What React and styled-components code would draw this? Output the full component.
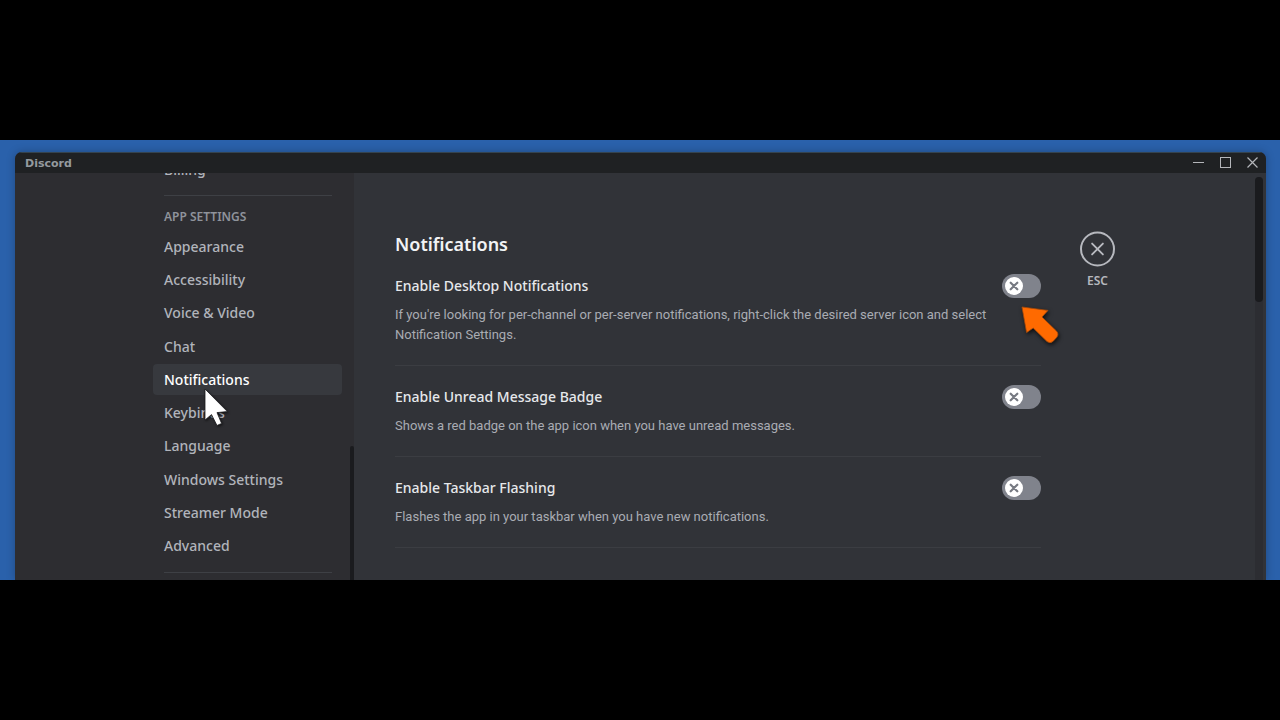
import React from "react";
import styled, { createGlobalStyle } from "styled-components";

const GlobalStyle = createGlobalStyle`
  * {
    box-sizing: border-box;
  }
  body {
    margin: 0;
    background: #000;
    font-family: "Noto Sans", "Open Sans", sans-serif;
  }
`;

const Page = styled.div`
  display: grid;
  grid-template-rows: 7fr 22fr 7fr;
  height: 100vh;
`;

const Desktop = styled.div`
  grid-row: 2;
  display: flex;
  min-height: 0;
  padding: 12px 14px 0 15px;
  overflow: hidden;
  background: #2a61ab;
`;

const Window = styled.div`
  flex: 1;
  display: flex;
  flex-direction: column;
  min-width: 0;
  overflow: hidden;
  border-radius: 7px 7px 0 0;
  background: #313338;
  box-shadow: 0 0 8px rgba(0, 0, 0, 0.25);
`;

const TitleBar = styled.header`
  flex: none;
  display: flex;
  justify-content: space-between;
  height: 21px;
  padding-left: 10px;
  background: #1f2123;
  box-shadow: inset 0 1px 0 #34434f;
`;

const Wordmark = styled.span`
  font-family: "DejaVu Sans", sans-serif;
  font-size: 11px;
  font-weight: 700;
  line-height: 24px;
  color: #949a9f;
`;

const WindowButtons = styled.div`
  display: flex;
`;

const WindowButton = styled.button`
  display: grid;
  place-items: center;
  width: 27px;
  padding: 0;
  border: 0;
  background: none;
  color: #b4b6ba;
`;

const Body = styled.div`
  flex: 1;
  display: grid;
  grid-template-columns: 339fr 912fr;
  min-height: 0;
`;

const Sidebar = styled.aside`
  display: flex;
  justify-content: flex-end;
  min-height: 0;
  overflow: hidden;
  background: #2d2d31;
`;

const Nav = styled.nav`
  width: 189px;
  margin-top: -19px;
  margin-right: 8px;
`;

const NavList = styled.ul`
  display: grid;
  gap: 2px;
  min-height: ${(props) => (props.$tall ? "331px" : "31px")};
  margin: 0;
  padding: 0;
  list-style: none;
`;

const NavItem = styled.li`
  position: relative;
  display: grid;
`;

const NavLink = styled.a`
  display: flex;
  align-items: center;
  min-height: 31px;
  padding: 0 11px;
  border-radius: 4px;
  font-size: 14px;
  font-weight: 500;
  line-height: 20px;
  text-decoration: none;
  color: ${(props) => (props.$active ? "#fff" : "#b1b4bb")};
  background: ${(props) => (props.$active ? "#37393e" : "transparent")};
`;

const NavDivider = styled.hr`
  height: 1px;
  margin: 10px 10px 11px 11px;
  border: 0;
  background: #3e4045;
`;

const NavHeading = styled.h2`
  margin: 0 0 4px 11px;
  font-size: 12px;
  font-weight: 600;
  line-height: 20px;
  text-transform: uppercase;
  color: #8f939b;
`;

const SidebarTrack = styled.div`
  width: 4px;
  display: flex;
  flex-direction: column;
  justify-content: flex-end;
`;

const SidebarThumb = styled.div`
  height: 33%;
  border-radius: 2px 2px 0 0;
  background: #1a1b1e;
`;

const Main = styled.main`
  display: flex;
  min-width: 0;
  min-height: 0;
  overflow: hidden;
  background: #313338;
`;

const Content = styled.section`
  flex: 0 1 646px;
  margin: 60px 39px 0 41px;
`;

const Title = styled.h1`
  margin: 0;
  font-size: 18px;
  font-weight: 600;
  line-height: 22px;
  color: #f2f3f5;
`;

const Setting = styled.div`
  padding: 19px 0 20px;
  border-bottom: 1px solid #3b3d42;
`;

const SettingHead = styled.div`
  display: flex;
  align-items: center;
  justify-content: space-between;
  height: 24px;
  margin-bottom: 7px;
`;

const SettingLabel = styled.label`
  font-size: 14px;
  font-weight: 500;
  line-height: 24px;
  color: #e6e8eb;
`;

const SettingNote = styled.p`
  margin: 0;
  font-family: Roboto, "Noto Sans", sans-serif;
  font-size: 13px;
  line-height: 20px;
  color: #a9acb3;
`;

const SwitchBox = styled.span`
  position: relative;
  display: grid;
`;

const SwitchInput = styled.input`
  grid-area: 1 / 1;
  appearance: none;
  width: 39px;
  height: 24px;
  margin: 0;
  border-radius: 12px;
  background: #80838c;

  &:checked {
    background: #23a55a;
  }
`;

const Knob = styled.svg`
  grid-area: 1 / 1;
  pointer-events: none;

  ${SwitchInput}:checked + & {
    transform: translateX(15px);
  }
`;

const Arrow = styled.svg`
  position: absolute;
  top: 31px;
  left: 18px;
  filter: drop-shadow(1px 2px 2px rgba(0, 0, 0, 0.7));
`;

const Pointer = styled.svg`
  position: absolute;
  top: 23px;
  left: 50px;
  z-index: 1;
  filter: drop-shadow(1px 1px 1px rgba(0, 0, 0, 0.6));
`;

const CloseButton = styled.button`
  display: flex;
  flex-direction: column;
  align-items: center;
  align-self: flex-start;
  gap: 4px;
  margin-top: 58px;
  padding: 0;
  border: 0;
  background: none;
  font-family: inherit;
  font-size: 12px;
  font-weight: 600;
  line-height: 20px;
  color: #b6b8be;
`;

const MainTrack = styled.div`
  width: 8px;
  margin: 4px 3px 0 auto;
  border-radius: 4px 4px 0 0;
  background: #2c2d32;
`;

const MainThumb = styled.div`
  height: 31%;
  border-radius: 4px;
  background: #1a1b1e;
`;

const navItems = [
  "Appearance",
  "Accessibility",
  "Voice & Video",
  "Chat",
  "Notifications",
  "Keybinds",
  "Language",
  "Windows Settings",
  "Streamer Mode",
  "Advanced",
];

const settings = [
  {
    id: "desktop",
    label: "Enable Desktop Notifications",
    note: "If you're looking for per-channel or per-server notifications, right-click the desired server icon and select Notification Settings.",
    arrow: true,
  },
  {
    id: "badge",
    label: "Enable Unread Message Badge",
    note: "Shows a red badge on the app icon when you have unread messages.",
  },
  {
    id: "flashing",
    label: "Enable Taskbar Flashing",
    note: "Flashes the app in your taskbar when you have new notifications.",
  },
];

const Switch = ({ id, children }) => (
  <SwitchBox>
    <SwitchInput type="checkbox" id={id} />
    <Knob width="24" height="24" viewBox="0 0 24 24" aria-hidden="true">
      <circle cx="12" cy="12" r="9" fill="#fff" />
      <path d="M8.7 8.7l6.6 6.6M15.3 8.7l-6.6 6.6" stroke="#777a82" strokeWidth="2.2" strokeLinecap="round" />
    </Knob>
    {children}
  </SwitchBox>
);

const App = () => {
  return (
    <Page>
      <GlobalStyle />
      <Desktop>
        <Window>
          <TitleBar>
            <Wordmark>Discord</Wordmark>
            <WindowButtons>
              <WindowButton aria-label="Minimize">
                <svg width="11" height="11" viewBox="0 0 11 11">
                  <path d="M0 5.5h11" stroke="currentColor" />
                </svg>
              </WindowButton>
              <WindowButton aria-label="Maximize">
                <svg width="11" height="11" viewBox="0 0 11 11">
                  <rect x="0.5" y="0.5" width="10" height="10" fill="none" stroke="currentColor" />
                </svg>
              </WindowButton>
              <WindowButton aria-label="Close">
                <svg width="11" height="11" viewBox="0 0 11 11">
                  <path d="M0.5 0.5l10 10M10.5 0.5l-10 10" stroke="currentColor" strokeWidth="1.2" />
                </svg>
              </WindowButton>
            </WindowButtons>
          </TitleBar>
          <Body>
            <Sidebar>
              <Nav>
                <NavList>
                  <NavItem>
                    <NavLink href="#">Billing</NavLink>
                  </NavItem>
                </NavList>
                <NavDivider />
                <NavHeading>App Settings</NavHeading>
                <NavList $tall>
                  {navItems.map((item) => (
                    <NavItem key={item}>
                      <NavLink href="#" $active={item === "Notifications"}>
                        {item}
                      </NavLink>
                      {item === "Notifications" && (
                        <Pointer width="26" height="40" viewBox="-2 -2 26 40" aria-hidden="true">
                          <path
                            d="M0 0V31L6.5 25.6L12 36.5L16.6 34.4L12 23.6L22.4 22.6Z"
                            fill="#fff"
                            stroke="#1c1c1f"
                            strokeWidth="0.8"
                          />
                        </Pointer>
                      )}
                    </NavItem>
                  ))}
                </NavList>
                <NavDivider />
              </Nav>
              <SidebarTrack>
                <SidebarThumb />
              </SidebarTrack>
            </Sidebar>
            <Main>
              <Content>
                <Title>Notifications</Title>
                {settings.map((setting) => (
                  <Setting key={setting.id}>
                    <SettingHead>
                      <SettingLabel htmlFor={setting.id}>{setting.label}</SettingLabel>
                      <Switch id={setting.id}>
                        {setting.arrow && (
                          <Arrow width="42" height="42" viewBox="-2 -2 42 42" aria-hidden="true">
                            <path
                              d="M0 0L26 3.4L20 10L34 23.6Q37.6 27 34.6 30.6L31 34.4Q28 37 25 34.6L11.2 21L4.6 25.6Z"
                              fill="#ff6a00"
                              stroke="#a84a0a"
                              strokeWidth="0.8"
                              strokeLinejoin="round"
                            />
                          </Arrow>
                        )}
                      </Switch>
                    </SettingHead>
                    <SettingNote>{setting.note}</SettingNote>
                  </Setting>
                ))}
              </Content>
              <CloseButton>
                <svg width="35" height="36" viewBox="0 0 35 36" aria-hidden="true">
                  <circle cx="17.5" cy="18" r="16.5" fill="none" stroke="currentColor" strokeWidth="2" />
                  <path
                    d="M12.1 12.6l10.8 10.8M22.9 12.6l-10.8 10.8"
                    stroke="currentColor"
                    strokeWidth="1.9"
                    strokeLinecap="round"
                  />
                </svg>
                ESC
              </CloseButton>
              <MainTrack>
                <MainThumb />
              </MainTrack>
            </Main>
          </Body>
        </Window>
      </Desktop>
    </Page>
  );
};

export default App;
